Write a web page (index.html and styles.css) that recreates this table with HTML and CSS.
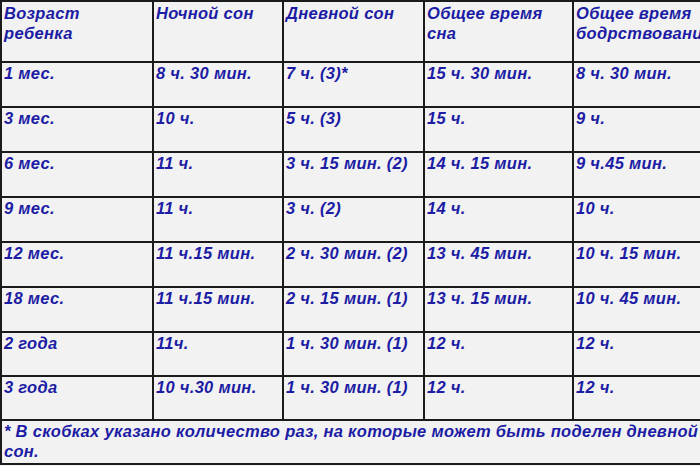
FILE: index.html
```html
<!DOCTYPE html>
<html lang="ru">
<head>
<meta charset="utf-8">
<title>Режим сна ребенка</title>
<link rel="stylesheet" href="styles.css">
</head>
<body>
<div class="frame">
  <div class="sleep-table">
    <div class="cell head">Возраст<br>ребенка</div>
    <div class="cell head">Ночной сон</div>
    <div class="cell head">Дневной сон</div>
    <div class="cell head">Общее время<br>сна</div>
    <div class="cell head">Общее время<br>бодрствования</div>

    <div class="cell">1 мес.</div>
    <div class="cell">8 ч. 30 мин.</div>
    <div class="cell">7 ч. (3)*</div>
    <div class="cell">15 ч. 30 мин.</div>
    <div class="cell">8 ч. 30 мин.</div>

    <div class="cell">3 мес.</div>
    <div class="cell">10 ч.</div>
    <div class="cell">5 ч. (3)</div>
    <div class="cell">15 ч.</div>
    <div class="cell">9 ч.</div>

    <div class="cell">6 мес.</div>
    <div class="cell">11 ч.</div>
    <div class="cell">3 ч. 15 мин. (2)</div>
    <div class="cell">14 ч. 15 мин.</div>
    <div class="cell">9 ч.45 мин.</div>

    <div class="cell">9 мес.</div>
    <div class="cell">11 ч.</div>
    <div class="cell">3 ч. (2)</div>
    <div class="cell">14 ч.</div>
    <div class="cell">10 ч.</div>

    <div class="cell">12 мес.</div>
    <div class="cell">11 ч.15 мин.</div>
    <div class="cell">2 ч. 30 мин. (2)</div>
    <div class="cell">13 ч. 45 мин.</div>
    <div class="cell">10 ч. 15 мин.</div>

    <div class="cell">18 мес.</div>
    <div class="cell">11 ч.15 мин.</div>
    <div class="cell">2 ч. 15 мин. (1)</div>
    <div class="cell">13 ч. 15 мин.</div>
    <div class="cell">10 ч. 45 мин.</div>

    <div class="cell">2 года</div>
    <div class="cell">11ч.</div>
    <div class="cell">1 ч. 30 мин. (1)</div>
    <div class="cell">12 ч.</div>
    <div class="cell">12 ч.</div>

    <div class="cell">3 года</div>
    <div class="cell">10 ч.30 мин.</div>
    <div class="cell">1 ч. 30 мин. (1)</div>
    <div class="cell">12 ч.</div>
    <div class="cell">12 ч.</div>

    <div class="cell note">* В скобках указано количество раз, на которые может быть поделен дневной<br>сон.</div>
  </div>
</div>
</body>
</html>
```

FILE: styles.css
```css
html, body {
  margin: 0;
  padding: 0;
  background: #f2f2f2;
}

.frame {
  width: 700px;
  height: 466px;
  overflow: hidden;
  background: #f2f2f2;
}

.sleep-table {
  display: grid;
  grid-template-columns: 152px 130px 141px 149px 160px;
  grid-template-rows: 61px 45px 45px 45px 45px 45px 45px 44px 44px 44px;
  width: max-content;
  border-top: 2px solid #1b1b1b;
  border-left: 2px solid #1b1b1b;
  font-family: "Liberation Sans", Arial, sans-serif;
  font-size: 16.5px;
  letter-spacing: 0.3px;
  font-weight: bold;
  font-style: italic;
  line-height: 20px;
  color: #1c1ca4;
}

.cell {
  box-sizing: border-box;
  border-right: 2px solid #1b1b1b;
  border-bottom: 2px solid #1b1b1b;
  padding: 0 2px 0 2px;
  overflow: hidden;
  white-space: nowrap;
}

.head {
  padding-top: 1px;
}

.note {
  grid-column: 1 / -1;
  white-space: normal;
}
```
